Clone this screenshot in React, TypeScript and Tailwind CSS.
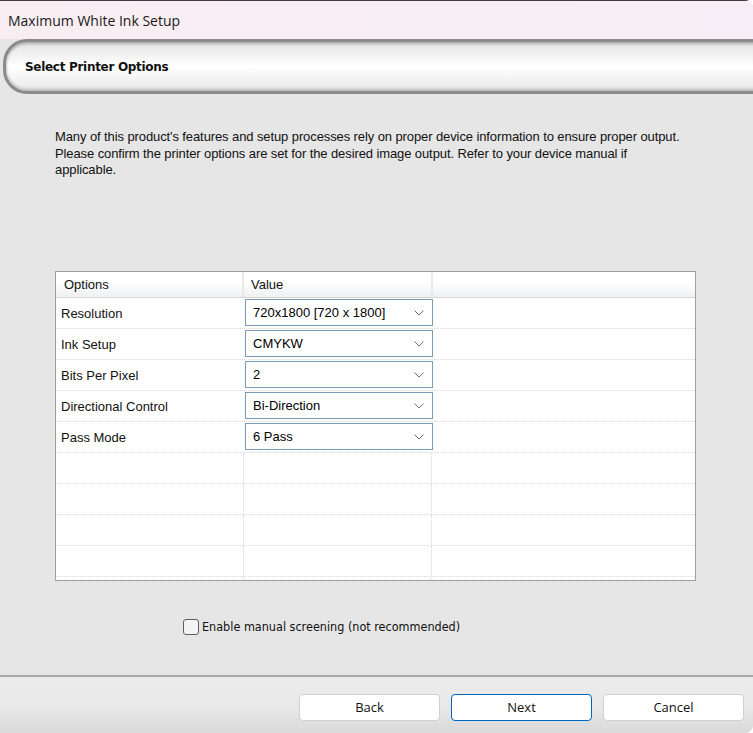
import { useState } from 'react';

// Printer option rows shown in the grid
const options = [
  { label: 'Resolution', value: '720x1800 [720 x 1800]' },
  { label: 'Ink Setup', value: 'CMYKW' },
  { label: 'Bits Per Pixel', value: '2' },
  { label: 'Directional Control', value: 'Bi-Direction' },
  { label: 'Pass Mode', value: '6 Pass' },
];

const emptyRows = 4;

const Chevron = () => (
  <svg width="10" height="6" viewBox="0 0 10 6" className="shrink-0">
    <path d="M0.5 0.5 L5 5 L9.5 0.5" fill="none" stroke="#707070" strokeWidth="1" />
  </svg>
);

const ComboBox = ({ value }: { value: string }) => (
  <div className="mx-px flex h-[27px] w-[188px] items-center justify-between border border-[#7a9ab5] bg-white pl-[7px] pr-[8px]">
    <span className="text-[13px] text-black">{value}</span>
    <Chevron />
  </div>
);

export default function App() {
  const [manual, setManual] = useState(false);

  return (
    <div
      className="flex h-[733px] w-[753px] flex-col overflow-hidden rounded-tr-[8px] rounded-br-[8px] bg-[#e6e6e6]"
      style={{ fontFamily: '"Liberation Sans", Arial, sans-serif' }}
    >
      {/* title bar */}
      <div className="flex h-[39px] shrink-0 items-center border-t border-[#3c3c3c] bg-gradient-to-r from-[#f8eef2] to-[#f7eef7] pl-[8px]">
        <span className="text-[14px] text-[#1a1a1a]" style={{ fontFamily: '"Open Sans", "Noto Sans", sans-serif' }}>
          Maximum White Ink Setup
        </span>
      </div>

      {/* step banner */}
      <div className="shrink-0 pl-[3px]">
        <div className="-mr-[10px] flex h-[55px] items-center rounded-l-[24px] border-y-[3px] border-l-[3px] border-[#8a8a8a] bg-gradient-to-b from-[#e4e4e4] via-white to-[#e8e8e8] pl-[19px] shadow-[inset_0_2px_3px_rgba(0,0,0,0.25),inset_0_-2px_3px_rgba(0,0,0,0.2)]">
          <span className="font-bold tracking-[-0.3px] text-[#111]" style={{ fontFamily: '"DejaVu Sans", Verdana, sans-serif', fontSize: '12px' }}>
            Select Printer Options
          </span>
        </div>
      </div>

      {/* description */}
      <div className="whitespace-nowrap px-[55px] pt-[35px] text-[13px] leading-[16.5px] tracking-[-0.1px] text-[#111]">
        Many of this product's features and setup processes rely on proper device information to ensure proper output.
        <br />
        Please confirm the printer options are set for the desired image output. Refer to your device manual if
        <br />
        applicable.
      </div>

      {/* options grid */}
      <div className="ml-[55px] mt-[92px] h-[310px] w-[641px] overflow-hidden border border-[#a0a0a0] bg-white text-[13px]">
        <div className="flex h-[26px] border-b border-[#d5d5d5] bg-gradient-to-b from-white from-40% to-[#eef0f2]">
          <div className="flex w-[188px] items-center border-r-2 border-[#eaeaea] pl-[8px] pt-[2px] text-[#111]">Options</div>
          <div className="flex w-[189px] items-center border-r-2 border-[#eaeaea] pl-[7px] pt-[2px] text-[#111]">Value</div>
          <div className="flex-1" />
        </div>
        {options.map((o) => (
          <div key={o.label} className="flex h-[31px] items-center border-b border-dotted border-[#d8d8d8]">
            <div className="w-[188px] pl-[5px] pt-[2px] text-[#111]">{o.label}</div>
            <ComboBox value={o.value} />
            <div className="flex-1" />
          </div>
        ))}
        {Array.from({ length: emptyRows }).map((_, i) => (
          <div key={i} className="flex h-[31px] border-b border-dotted border-[#d8d8d8]">
            <div className="w-[188px] border-r border-dotted border-[#d8d8d8]" />
            <div className="w-[188px] border-r border-dotted border-[#d8d8d8]" />
            <div className="flex-1" />
          </div>
        ))}
        <div className="flex h-[31px]">
          <div className="w-[188px] border-r border-dotted border-[#d8d8d8]" />
          <div className="w-[188px] border-r border-dotted border-[#d8d8d8]" />
        </div>
      </div>

      {/* manual screening */}
      <label className="ml-[183px] mt-[37px] flex cursor-pointer items-center gap-[3px] text-[#111]" style={{ fontFamily: '"DejaVu Sans Condensed", "DejaVu Sans", sans-serif', fontSize: '12.5px' }}>
        <span
          onClick={() => setManual(!manual)}
          className="flex h-[16px] w-[16px] items-center justify-center rounded-[3px] border border-[#5e5e5e] bg-[#f4f4f4]"
        >
          {manual && (
            <svg width="10" height="8" viewBox="0 0 10 8">
              <path d="M1 4 L4 7 L9 1" fill="none" stroke="#111" strokeWidth="1.4" />
            </svg>
          )}
        </span>
        Enable manual screening (not recommended)
      </label>

      {/* footer */}
      <div className="mt-[39px] flex flex-1 flex-col border-t-2 border-[#a9a9a9] bg-gradient-to-b from-[#ebebeb] via-[#e9e9e9] to-[#d9d9d9]">
        <div className="flex justify-end gap-[11px] pr-[9px] pt-[17px] text-[13px]" style={{ fontFamily: '"Open Sans", "Noto Sans", sans-serif' }}>
          {['Back', 'Next', 'Cancel'].map((b) => (
            <button
              key={b}
              className={
                b === 'Next'
                  ? 'h-[27px] w-[141px] rounded-[4px] border border-[#0067c0] bg-white text-[#111]'
                  : 'h-[27px] w-[141px] rounded-[4px] border border-[#cfcfcf] bg-white text-[#111]'
              }
            >
              {b}
            </button>
          ))}
        </div>
      </div>
    </div>
  );
}
